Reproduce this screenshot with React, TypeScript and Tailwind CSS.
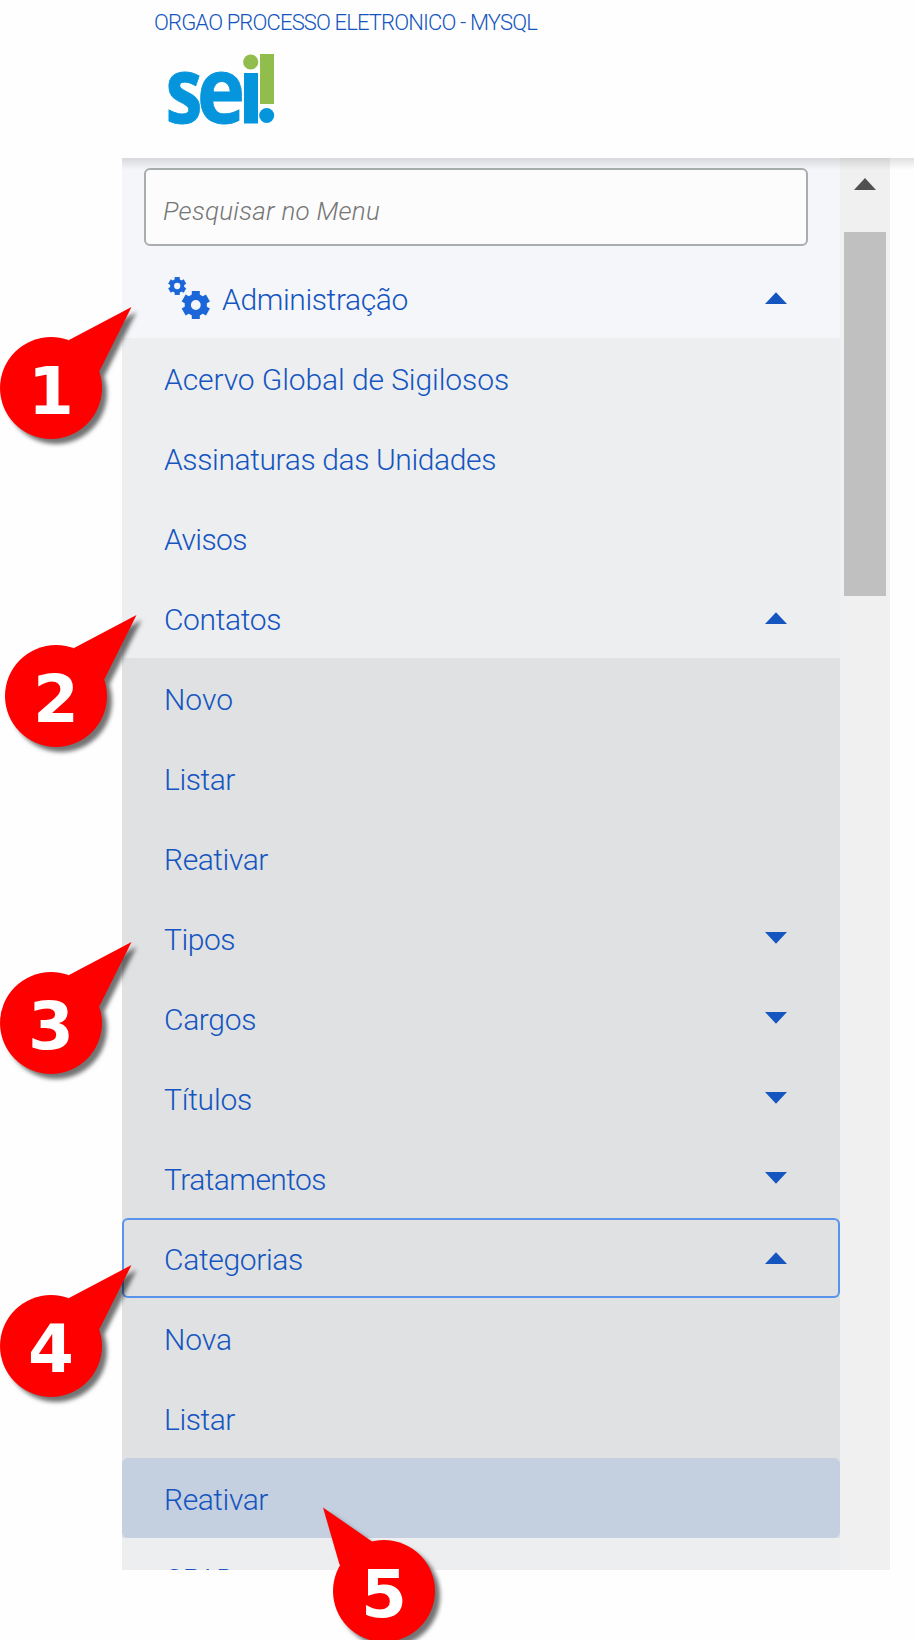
import { useLayoutEffect, useRef } from "react";

type TextProps = { text: string; width: number; className?: string };

/** Spreads the letters of a label so that it takes the given width. */
function Label({ text, width, className = "" }: TextProps) {
  const ref = useRef<HTMLSpanElement>(null);
  useLayoutEffect(() => {
    const el = ref.current;
    if (!el) return;
    el.style.letterSpacing = "0px";
    const natural = el.getBoundingClientRect().width;
    el.style.letterSpacing = `${(width - natural) / text.length}px`;
  }, [text, width]);
  return (
    <span ref={ref} className={`whitespace-nowrap ${className}`}>
      {text}
    </span>
  );
}

type Item = { text: string; width: number; arrow?: "up" | "down" };

function Arrow({ dir }: { dir: "up" | "down" }) {
  return (
    <svg
      width="24"
      height="12"
      viewBox="0 0 24 12"
      className={dir === "up" ? "shrink-0" : "-mt-px shrink-0"}
      fill="#1455c0"
    >
      {dir === "up" ? <path d="M12 0.3 L23 12 H1 Z" /> : <path d="M1 0 H23 L12 11.7 Z" />}
    </svg>
  );
}

function Row({ item, className = "" }: { item: Item; className?: string }) {
  return (
    <li className={`flex h-20 items-center justify-between pr-[52px] pl-[42px] ${className}`}>
      <Label text={item.text} width={item.width} className="pt-1" />
      {item.arrow && <Arrow dir={item.arrow} />}
    </li>
  );
}

const admin: Item[] = [
  { text: "Acervo Global de Sigilosos", width: 345 },
  { text: "Assinaturas das Unidades", width: 332 },
  { text: "Avisos", width: 83 },
  { text: "Contatos", width: 117, arrow: "up" },
];

const contatos: Item[] = [
  { text: "Novo", width: 69 },
  { text: "Listar", width: 71 },
  { text: "Reativar", width: 104 },
  { text: "Tipos", width: 71, arrow: "down" },
  { text: "Cargos", width: 92, arrow: "down" },
  { text: "Títulos", width: 88, arrow: "down" },
  { text: "Tratamentos", width: 162, arrow: "down" },
];

const categorias: Item[] = [
  { text: "Nova", width: 68 },
  { text: "Listar", width: 71 },
];

function Gear({ cx, cy, s }: { cx: number; cy: number; s: number }) {
  return (
    <g transform={`translate(${cx} ${cy}) scale(${s})`} stroke="#1b66d8" fill="none">
      <circle r="8" strokeWidth="6.2" />
      {[0, 60, 120, 180, 240, 300].map((a) => (
        <path key={a} d="M0 -8 V-14" strokeWidth="8" transform={`rotate(${a})`} />
      ))}
    </g>
  );
}

function Logo() {
  return (
    <svg width="108" height="74" viewBox="168 53 108 74" className="overflow-visible">
      <text
        y="122.9"
        fontSize="92"
        fontWeight="700"
        fill="#0495dd"
        stroke="#0495dd"
        strokeWidth="0.8"
        className="font-['Open_Sans',sans-serif]"
      >
        <tspan x="165.5" textLength="37" lengthAdjust="spacingAndGlyphs">
          s
        </tspan>
        <tspan x="197" textLength="48" lengthAdjust="spacingAndGlyphs">
          e
        </tspan>
      </text>
      <rect x="244" y="73" width="14" height="50.5" fill="#0495dd" />
      <circle cx="250.7" cy="62" r="7.6" fill="#90bd4b" />
      <rect x="260" y="54" width="14" height="50" fill="#90bd4b" />
      <circle cx="266.7" cy="115.5" r="7.5" fill="#0495dd" />
    </svg>
  );
}

function Callout({ n, className, left }: { n: number; className: string; left?: boolean }) {
  return (
    <svg
      className={`absolute overflow-visible drop-shadow-[5px_5px_2px_rgba(0,0,0,0.55)] ${className}`}
      width="102"
      height="102"
      viewBox="-51 -51 102 102"
    >
      <circle r="51" fill="#fe0000" />
      <path d={left ? "M-61 -83.5 L-12 -49.5 L0 0 L-44.5 -26.5 Z" : "M80.5 -81 L18 -48 L0 0 L48.5 -17 Z"} fill="#fe0000" />
      <text
        y="26"
        textAnchor="middle"
        fontSize="66"
        fontWeight="700"
        fill="#fff"
        className="font-['DejaVu_Sans',sans-serif]"
      >
        {n}
      </text>
    </svg>
  );
}

export default function App() {
  return (
    <div className="relative flex h-[1640px] w-[914px] flex-col overflow-hidden bg-[#fefefe] font-['Roboto',sans-serif] text-[30px] leading-none font-light text-[#1455c0]">
      <header className="flex h-[158px] shrink-0 flex-col items-start pl-[154px]">
        <Label text="ORGAO PROCESSO ELETRONICO - MYSQL" width={383} className="mt-[11px] text-[22px] leading-[24px]" />
        <div className="mt-[18px] ml-[14px]">
          <Logo />
        </div>
      </header>

      <div className="relative ml-[122px] flex h-[1412px] shrink-0 overflow-hidden">
        <nav className="w-[718px] bg-[#f4f6f9]">
          <div className="px-[22px] pt-[10px]">
            <div className="flex h-[78px] w-[664px] items-center rounded-md border-2 border-[#a8adae] bg-[#fcfcfc] pt-2 pl-[17px] text-[26px] text-[#757575] italic">
              <Label text="Pesquisar no Menu" width={217} />
            </div>
          </div>
          <div className="mt-3 flex h-20 items-center pr-[52px] pl-[46px]">
            <svg width="42" height="42" viewBox="168 278 42 42">
              <Gear cx={177.2} cy={287} s={0.64} />
              <Gear cx={195.8} cy={306} s={1} />
            </svg>
            <div className="flex flex-1 items-center justify-between pl-3">
              <Label text="Administração" width={186} className="pt-1" />
              <Arrow dir="up" />
            </div>
          </div>
          <ul className="bg-[#edeef0]">
            {admin.map((i) => (
              <Row key={i.text} item={i} />
            ))}
            <li>
              <ul className="bg-[#dfe1e3]">
                {contatos.map((i) => (
                  <Row key={i.text} item={i} />
                ))}
                <Row item={{ text: "Categorias", width: 139, arrow: "up" }} className="rounded-md inset-ring-2 inset-ring-[#5993ec]" />
                {categorias.map((i) => (
                  <Row key={i.text} item={i} />
                ))}
                <Row item={{ text: "Reativar", width: 104 }} className="rounded-md bg-[#c4cfdf]" />
              </ul>
            </li>
            <Row item={{ text: "CPAD", width: 71 }} />
          </ul>
        </nav>
        <div className="flex w-[50px] flex-col items-center bg-[#f0f0f0]">
          <svg width="22" height="12" viewBox="0 0 22 12" className="mt-5" fill="#505050">
            <path d="M11 0 L22 12 H0 Z" />
          </svg>
          <div className="mt-[42px] h-[364px] w-[42px] bg-[#c0c0c0]" />
        </div>
        <div className="absolute inset-x-0 top-0 h-3 bg-linear-to-b from-black/12 to-transparent" />
      </div>

      <Callout n={1} className="top-[337px] left-0" />
      <Callout n={2} className="top-[644.5px] left-[5px]" />
      <Callout n={3} className="top-[972px] left-0" />
      <Callout n={4} className="top-[1294.5px] left-0" />
      <Callout n={5} left className="top-[1539.5px] left-[332.5px]" />
    </div>
  );
}
